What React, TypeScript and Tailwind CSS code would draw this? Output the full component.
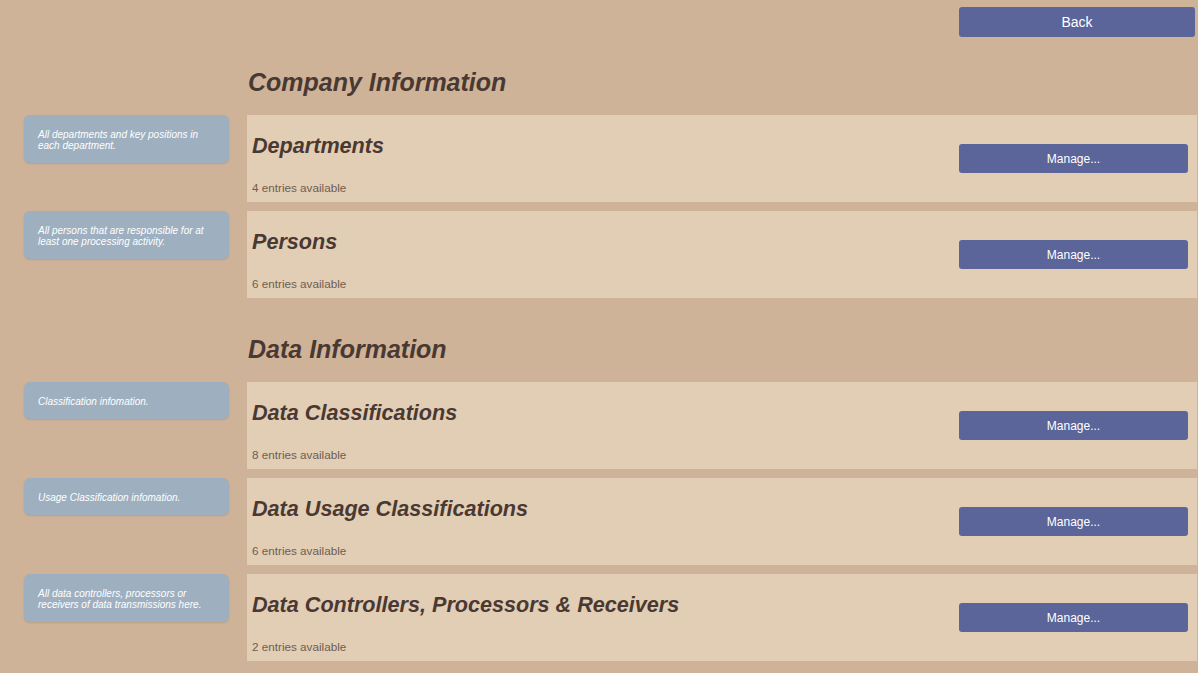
import React from "react";

type Item = { title: string; count: number; desc: string[] };

const sections: { heading: string; items: Item[] }[] = [
  {
    heading: "Company Information",
    items: [
      { title: "Departments", count: 4, desc: ["All departments and key positions in", "each department."] },
      { title: "Persons", count: 6, desc: ["All persons that are responsible for at", "least one processing activity."] },
    ],
  },
  {
    heading: "Data Information",
    items: [
      { title: "Data Classifications", count: 8, desc: ["Classification infomation."] },
      { title: "Data Usage Classifications", count: 6, desc: ["Usage Classification infomation."] },
      {
        title: "Data Controllers, Processors & Receivers",
        count: 2,
        desc: ["All data controllers, processors or", "receivers of data transmissions here."],
      },
    ],
  },
];

function Row({ item }: { item: Item }) {
  return (
    <div className="flex items-start">
      <div className="ml-[24px] w-[205px] shrink-0 rounded-[6px] bg-[#9eb0bf] pl-[14px] pr-[8px] pt-[14px] pb-[12px] shadow-[0_1px_2px_rgba(0,0,0,0.12)]">
        {item.desc.map((d) => (
          <div key={d} className="text-[10px] leading-[11px] italic text-white">
            {d}
          </div>
        ))}
      </div>
      <div className="ml-[18px] mr-[1px] flex h-[87px] flex-1 items-center bg-[#e2cdb5]">
        <div className="flex h-full flex-1 flex-col pl-[5px]">
          <div className="pt-[18px] text-[21.6px] leading-[26px] font-bold italic text-[#4a3932]">{item.title}</div>
          <div className="mt-[22px] text-[11.7px] leading-[14px] text-[#6e5e52]">{item.count} entries available</div>
        </div>
        <button className="mr-[9px] h-[29px] w-[229px] rounded-[3px] bg-[#5b6599] text-[12px] text-white">
          Manage...
        </button>
      </div>
    </div>
  );
}

export default function App() {
  return (
    <div
      className="min-h-screen w-full bg-[#ceb398] pb-[12px]"
      style={{ fontFamily: '"Liberation Sans", Arial, sans-serif' }}
    >
      <div className="flex justify-end pt-[7px] pr-[3px]">
        <button className="h-[30px] w-[236px] rounded-[3px] bg-[#5b6599] text-[14px] text-white">Back</button>
      </div>
      {sections.map((s, si) => (
        <div key={s.heading} className={si === 0 ? "mt-[31px]" : "mt-[37px]"}>
          <div className="pl-[248px] pt-[1px] text-[25px] leading-[27px] font-bold italic text-[#4a3932]">{s.heading}</div>
          <div className="mt-[19px] flex flex-col gap-[9px]">
            {s.items.map((it) => (
              <Row key={it.title} item={it} />
            ))}
          </div>
        </div>
      ))}
    </div>
  );
}
